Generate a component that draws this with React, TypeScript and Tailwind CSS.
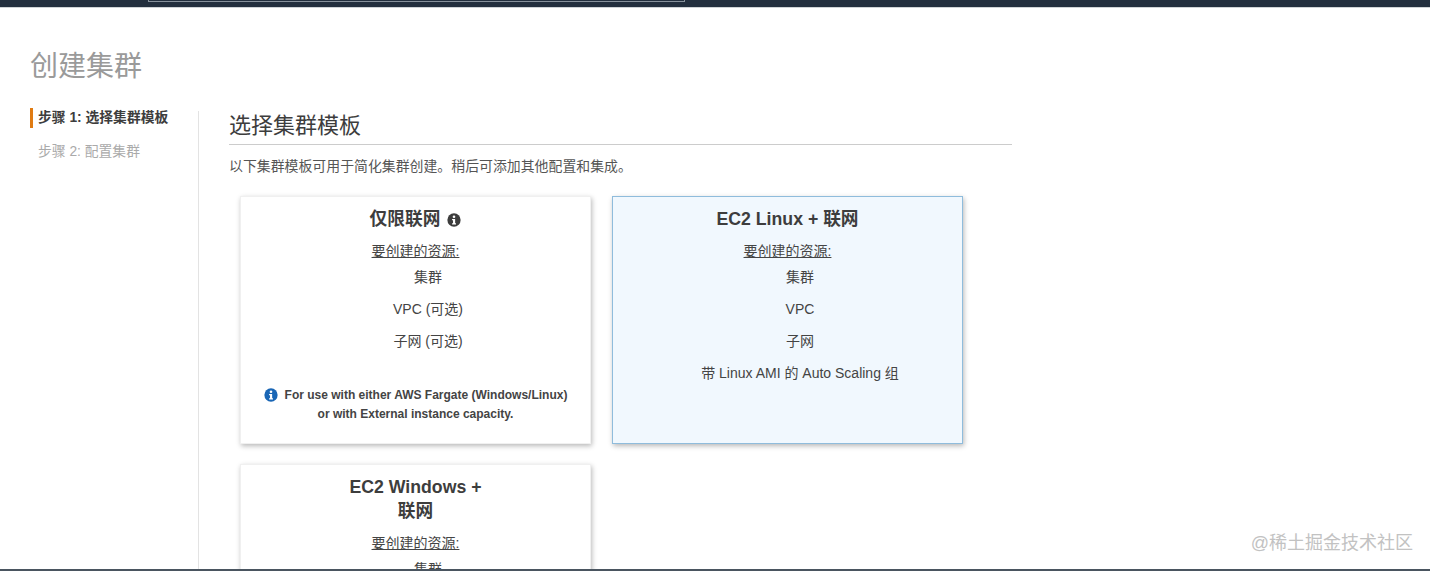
import React from "react";

const fontStack = "font-['Liberation_Sans','Noto_Sans_CJK_SC',sans-serif]";

const InfoIcon = ({ className }: { className: string }) => (
  <svg viewBox="0 0 16 16" className={className}>
    <circle cx="8" cy="8" r="7.6" fill="currentColor" />
    <circle cx="8" cy="4.3" r="1.5" fill="#fff" />
    <path d="M5.8 6.9h3.5v4.8h1V13.2H5.8v-1.5h1.1V8.4H5.8z" fill="#fff" />
  </svg>
);

type CardProps = {
  title: React.ReactNode;
  items: string[];
  selected?: boolean;
  children?: React.ReactNode;
};

const TemplateCard: React.FC<CardProps> = ({ title, items, selected, children }) => (
  <div
    className={`h-[248px] flex flex-col items-center pt-[10px] border shadow-[1px_2px_5px_rgba(0,0,0,0.28)] ${
      selected ? "bg-[#f1f8fe] border-[#8fbcdc]" : "bg-white border-[#f0f0f0]"
    }`}
  >
    <h3 className="text-[17.7px] leading-[24px] font-bold text-[#3d3d3d] text-center">
      {title}
    </h3>
    <p className="mt-[9px] text-[14px] leading-[22px] text-[#444] underline">
      要创建的资源:
    </p>
    <ul className="mt-[4px] pl-[25px] text-[14px] leading-[22px] text-[#444] text-center flex flex-col gap-[10px]">
      {items.map((item) => (
        <li key={item}>{item}</li>
      ))}
    </ul>
    {children}
  </div>
);

const App: React.FC = () => {
  return (
    <div className={`relative h-[571px] overflow-hidden flex flex-col bg-white ${fontStack}`}>
      <div className="h-[8px] shrink-0 bg-[#232f3e] border-b border-[#cfd3d6] flex">
        <div className="ml-[148px] w-[537px] h-[2px] border-x border-b border-[#87919b]" />
      </div>

      <div className="flex-1 min-h-0 pl-[30px]">
        <h1 className="mt-[41px] text-[28px] leading-[36px] text-[#9a9a9a]">创建集群</h1>

        <div className="mt-[26px] flex h-[500px]">
          <nav className="w-[169px] shrink-0 border-r border-[#e3e3e3]">
            <div className="-mt-[3px] h-[20px] border-l-[3px] border-[#e07b12] pl-[5px] text-[13.8px] leading-[20px] font-bold text-[#3d3d3d]">
              步骤 1: 选择集群模板
            </div>
            <div className="mt-[14px] pl-[8px] text-[13.8px] leading-[20px] text-[#aaa]">
              步骤 2: 配置集群
            </div>
          </nav>

          <main className="ml-[30px] w-[783px]">
            <h2 className="pb-[4px] text-[22px] leading-[29px] text-[#3d3d3d] border-b border-[#ccc]">
              选择集群模板
            </h2>
            <p className="mt-[11px] text-[13.9px] leading-[20px] text-[#555]">
              以下集群模板可用于简化集群创建。稍后可添加其他配置和集成。
            </p>

            <div className="mt-[20px] ml-[11px] w-[723px] grid grid-cols-[351px_351px] gap-x-[21px] gap-y-[20px]">
              <TemplateCard
                title={
                  <span className="flex items-center gap-[7px]">
                    仅限联网
                    <InfoIcon className="w-[14px] h-[14px] mt-[2px] text-[#3d3d3d]" />
                  </span>
                }
                items={["集群", "VPC (可选)", "子网 (可选)"]}
              >
                <p className="mt-[34px] text-[12px] leading-[19px] font-bold text-[#444] text-center">
                  <InfoIcon className="inline-block w-[14px] h-[14px] mr-[7px] -mt-[2px] text-[#1a66b5]" />
                  For use with either AWS Fargate (Windows/Linux)
                  <br />
                  or with External instance capacity.
                </p>
              </TemplateCard>

              <TemplateCard
                selected
                title="EC2 Linux + 联网"
                items={["集群", "VPC", "子网", "带 Linux AMI 的 Auto Scaling 组"]}
              />

              <TemplateCard
                title={
                  <>
                    EC2 Windows +
                    <br />
                    联网
                  </>
                }
                items={["集群"]}
              />
            </div>
          </main>
        </div>
      </div>

      <div className="absolute left-0 right-0 bottom-0 h-[2px] bg-[#4a5560]" />
      <div className="absolute right-[17px] bottom-[17px] text-[18px] leading-[22px] text-[#c2c2c2]">
        @稀土掘金技术社区
      </div>
    </div>
  );
};

export default App;
